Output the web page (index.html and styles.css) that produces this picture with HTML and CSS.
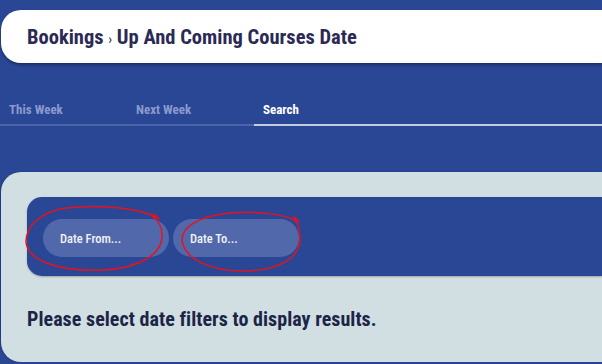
FILE: index.html
```html
<!DOCTYPE html>
<html>
<head>
<meta charset="utf-8">
<link rel="stylesheet" href="styles.css">
</head>
<body>
<div class="page">
  <header class="titlebar">
    <h1 class="title">Bookings <span class="sep">›</span> Up And Coming Courses Date</h1>
  </header>
  <nav class="tabs">
    <div class="tab">This Week</div>
    <div class="tab">Next Week</div>
    <div class="tab active">Search</div>
  </nav>
  <section class="panel">
    <div class="filters">
      <button class="pill">Date From...</button>
      <button class="pill">Date To...</button>
    </div>
    <p class="message">Please select date filters to display results.</p>
  </section>
  <svg class="annot" width="602" height="364" viewBox="0 0 602 364">
    <path d="M154 214 C158 217 160 222 158 218 C140 208 100 204 66 208 C40 212 26 226 26 242 C28 262 62 272 104 270 C140 268 162 254 162 236 C162 226 158 220 152 216" />
    <path d="M294 217 C298 220 300 224 298 221 C284 214 256 211 230 213 C200 216 182 226 182 240 C184 260 214 272 246 271 C280 270 300 258 300 238 C300 228 298 222 292 218" />
  </svg>
</div>
</body>
</html>
```
FILE: styles.css
```css
html, body {
  margin: 0;
  padding: 0;
}
body {
  background: #2a4796;
  font-family: "Roboto", "Liberation Sans", sans-serif;
  font-stretch: condensed;
  width: 602px;
  height: 364px;
  overflow: hidden;
}
.page {
  position: relative;
  width: 602px;
  height: 364px;
  padding-top: 10px;
  box-sizing: border-box;
}
.titlebar {
  margin-left: 1px;
  height: 53px;
  background: #ffffff;
  border-radius: 20px 0 0 20px;
  display: flex;
  align-items: center;
  padding-left: 26px;
  box-shadow: 0 2px 3px rgba(0, 0, 0, 0.35);
}
.title {
  margin: 0;
  font-size: 20.5px;
  font-weight: 700;
  color: #2b2a55;
}
.sep {
  font-size: 14px;
  font-weight: 400;
}
.tabs {
  display: flex;
  margin-top: 38px;
}
.tab {
  width: 127px;
  height: 25px;
  box-sizing: border-box;
  padding: 0 0 0 9px;
  font-size: 13px;
  line-height: 17px;
  font-weight: 700;
  color: #8a9ace;
  border-bottom: 2px solid #4b65aa;
}
.tab.active {
  flex: 1;
  color: #ffffff;
  border-bottom-color: #c4cbe0;
}
.panel {
  margin-top: 46px;
  margin-left: 1px;
  height: 190px;
  background: #d1dee2;
  border-radius: 20px 0 0 20px;
  padding: 25px 0 0 26px;
  box-sizing: border-box;
  box-shadow: -1px 0 2px rgba(0,0,0,0.2);
}
.filters {
  height: 79px;
  background: #2a4796;
  border-radius: 15px 0 0 15px;
  display: flex;
  align-items: center;
  gap: 4px;
  padding-left: 16px;
  box-sizing: border-box;
  box-shadow: 0 1px 2px rgba(0,0,0,0.25);
}
.pill {
  width: 126px;
  height: 38px;
  border: none;
  border-radius: 19px;
  background: #5169ab;
  color: #f1f3fa;
  font-family: inherit;
  font-stretch: condensed;
  font-size: 12.5px;
  font-weight: 500;
  text-align: left;
  padding: 0 0 0 17px;
  margin-top: 3px;
}
.message {
  margin: 31px 0 0 0;
  font-size: 20px;
  font-weight: 700;
  color: #1c2547;
  letter-spacing: 0.05px;
}
.annot {
  position: absolute;
  left: 0;
  top: 0;
  pointer-events: none;
}
.annot path {
  fill: none;
  stroke: #e8121c;
  stroke-width: 1.5;
  stroke-linecap: round;
}
```
